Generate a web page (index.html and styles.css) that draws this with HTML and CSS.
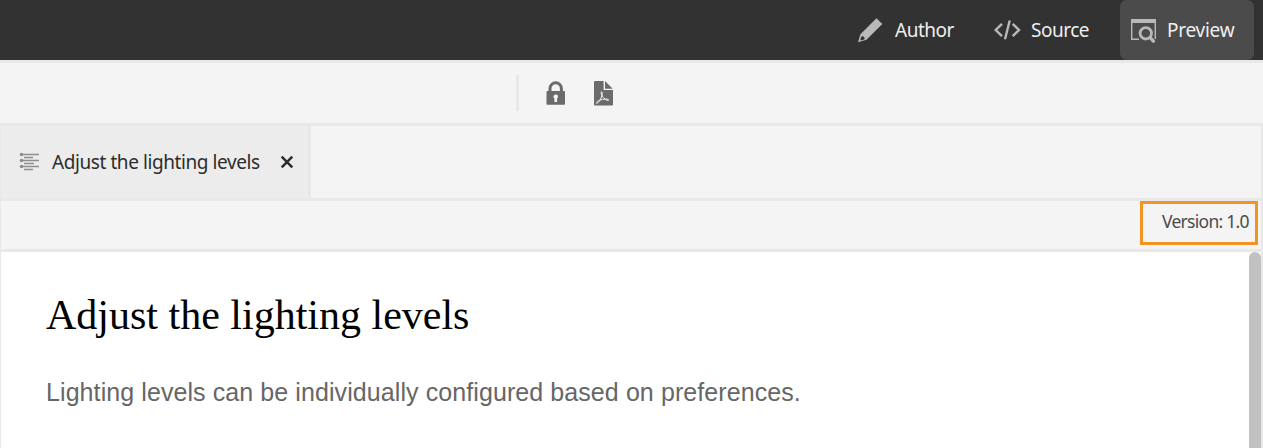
FILE: index.html
```html
<!DOCTYPE html>
<html lang="en">
<head>
<meta charset="utf-8">
<title>Adjust the lighting levels</title>
<link rel="stylesheet" href="styles.css">
</head>
<body>
<header class="topbar">
  <button class="mode author">
    <svg width="26" height="26" viewBox="0 0 26 26"><path fill="#b9b9b9" fill-rule="evenodd" d="M18.500 1.200 24.300 6.900 8.500 22.800 0 25.200 2.400 17.300ZM3.800 19 2.300 22.500 3.600 23.500 6.800 22 6 20Z"/></svg>
    <span class="label">Author</span>
  </button>
  <button class="mode source">
    <svg width="28" height="22" viewBox="0 0 28 22" fill="none" stroke="#b9b9b9" stroke-width="2.4"><path d="M8 4.800 1.700 11 8 17.200M18.700 4.800 25 11l-6.300 6.200M15.700 1.500 11 20.200"/></svg>
    <span class="label">Source</span>
  </button>
  <button class="mode preview">
    <svg width="26" height="26" viewBox="0 0 26 26" fill="none" stroke="#b9b9b9"><path fill="#b9b9b9" stroke="none" d="M0 1h25v4H0z"/><path stroke-width="1.400" d="M.7 4v17.300H8M24.300 4v17"/><circle cx="14.800" cy="15.300" r="5.700" stroke-width="2.800"/><path stroke-width="3.400" stroke-linecap="round" d="m19.200 19.700 3.200 3.400"/></svg>
    <span class="label">Preview</span>
  </button>
</header>
<div class="toolbar">
  <span class="divider"></span>
  <svg class="lock" width="20" height="24" viewBox="0 0 20 24"><path fill="none" stroke="#6b6b6b" stroke-width="3" d="M4 11V7.500a5.700 5.700 0 0 1 11.400 0V11"/><path fill="#6b6b6b" fill-rule="evenodd" d="M1.300 10h16.900q.8 0 .8.8v12.100q0 .8-.8.8H1.300q-.8 0-.8-.8V10.800q0-.8.8-.8ZM9.700 13.400a2.200 2.200 0 0 0-1.300 4V21h2.700v-3.600a2.200 2.200 0 0 0-1.400-4Z"/></svg>
  <svg class="pdf" width="19" height="25" viewBox="0 0 19 25"><path fill="#6b6b6b" d="M1 0h8.600v9H19v14.500q0 1-1 1H1q-1 0-1-1V1q0-1 1-1ZM11 0 18.700 7.700H11Z"/><path fill="none" stroke="#f4f4f4" stroke-width="1" d="M7.500 10.800c1.200 0 1 2.500-.1 5.200-1.500 3.900-3.700 6.700-4.800 6.300-1.300-.5 1.500-2.900 5.900-3.900 3.500-.8 6.700-.2 6.200.8-.7 1.300-5.500-1.400-7-5.200-.7-1.800-1-3.200-.2-3.200Z"/></svg>
</div>
<main class="editor">
  <div class="tabs">
    <div class="tab">
      <svg width="20" height="20" viewBox="0 0 20 20" stroke="#8e8e8e" fill="#8e8e8e"><path stroke-width="1.400" d="M3 2.500h17M5 5.500h9M3 8.500h17M5 11.500h10M3 14.500h17M5 17.500h9"/><g stroke="none"><circle cx="2.500" cy="2.500" r="1.800"/><circle cx="2.500" cy="8.500" r="1.800"/><circle cx="2.500" cy="14.500" r="1.800"/></g></svg>
      <span class="tab-title">Adjust the lighting levels</span>
      <svg class="close" width="14" height="14" viewBox="0 0 14 14"><path stroke="#2c2c2c" stroke-width="2.500" d="m1.700 1.700 10.600 10.600M12.300 1.700 1.700 12.300"/></svg>
    </div>
  </div>
  <div class="version-row"><div class="version">Version: 1.0</div></div>
  <div class="page">
    <article class="topic">
      <h1>Adjust the lighting levels</h1>
      <p>Lighting levels can be individually configured based on preferences.</p>
    </article>
    <div class="scrollbar"></div>
  </div>
</main>
</body>
</html>
```
FILE: styles.css
```css
* { box-sizing: border-box; }
body {
  margin: 0;
  height: 448px;
  overflow: hidden;
  display: flex;
  flex-direction: column;
  background: #f4f4f4;
  font-family: "Noto Sans", "Open Sans", sans-serif;
}
svg { display: block; flex: none; }
.topbar {
  height: 60px;
  flex: none;
  display: flex;
  justify-content: flex-end;
  padding-right: 9px;
  background: #323232;
}
.mode {
  display: flex;
  align-items: center;
  height: 60px;
  margin: 0;
  padding: 0;
  border: 0;
  background: none;
  color: #efefef;
  font: 19px/26px "Noto Sans", sans-serif;
  letter-spacing: -0.5px;
}
.label { white-space: nowrap; }
.author { width: 136px; gap: 11px; }
.source { width: 126px; gap: 9px; }
.preview {
  width: 134px;
  padding: 2px 0 0 11px;
  gap: 10px;
  border-radius: 7px;
  background: #4b4b4b;
  letter-spacing: -0.25px;
}
.preview .label { margin-top: -2px; }
.toolbar {
  height: 63px;
  flex: none;
  display: flex;
  align-items: center;
  padding-left: 516px;
  border-top: 3px solid #e8e8e8;
}
.divider { width: 3px; height: 36px; background: #e8e8e8; }
.lock { margin-left: 27px; }
.pdf { margin-left: 28px; }
.editor {
  flex: 1;
  min-height: 0;
  display: flex;
  flex-direction: column;
  border: solid #e8e8e8;
  border-width: 3px 2px 0 1px;
}
.tabs {
  height: 75px;
  flex: none;
  display: flex;
  border-bottom: 3px solid #e8e8e8;
}
.tab {
  width: 310px;
  display: flex;
  align-items: center;
  padding-left: 18px;
  background: #ececec;
  border-right: 3px solid #e8e8e8;
}
.tab-title {
  width: 208px;
  margin: 0 20px 0 13px;
  white-space: nowrap;
  font-size: 19px;
  letter-spacing: -0.42px;
  color: #2c2c2c;
}
.version-row {
  height: 51px;
  flex: none;
  display: flex;
  justify-content: flex-end;
  padding-right: 3px;
  border-bottom: 3px solid #e8e8e8;
}
.version {
  width: 118px;
  height: 44px;
  padding-left: 19px;
  border: 3px solid #f29423;
  white-space: nowrap;
  font-size: 17.5px;
  line-height: 34px;
  letter-spacing: -0.72px;
  color: #4b4b4b;
}
.page {
  flex: 1;
  min-height: 0;
  display: flex;
  background: #fff;
}
.topic { flex: 1; padding: 39px 0 0 45px; }
h1 {
  margin: 0;
  font: 400 42px/48px "Liberation Serif", serif;
  color: #000;
}
p {
  margin: 38px 0 0;
  font: 25px/30px "Liberation Sans", sans-serif;
  letter-spacing: 0.085px;
  color: #666;
}
.scrollbar {
  width: 12px;
  border-radius: 6px 6px 0 0;
  background: #c1c1c1;
}
```
